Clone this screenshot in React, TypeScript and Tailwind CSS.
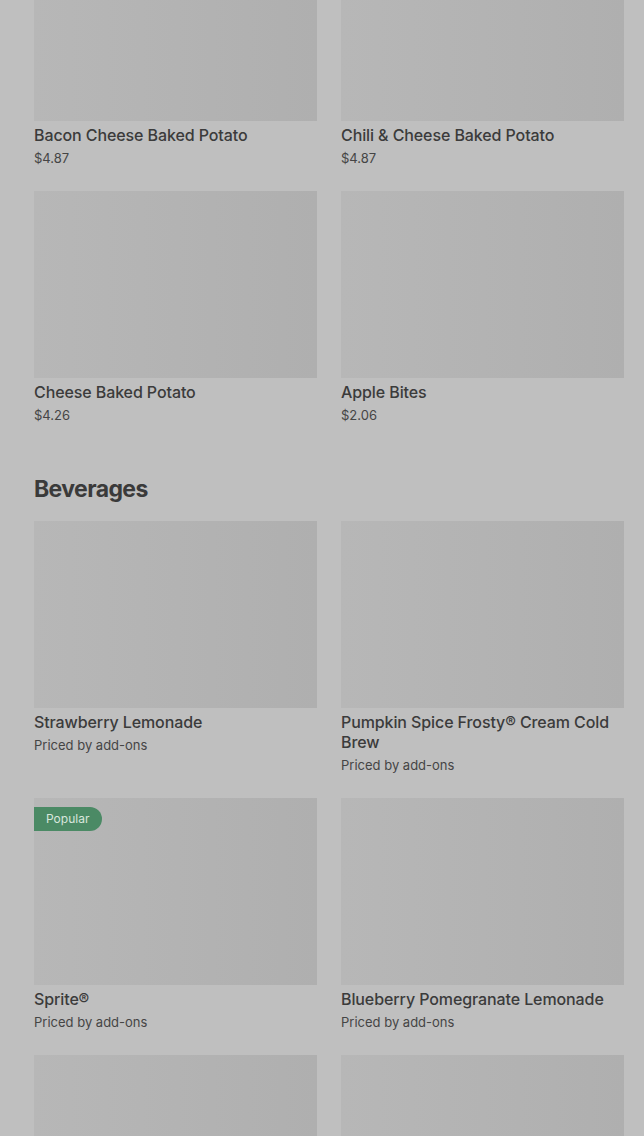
import React from "react";

type Item = {
    name: string;
    price: string;
    popular?: boolean;
};

const sides: Item[] = [
    { name: "Bacon Cheese Baked Potato", price: "$4.87" },
    { name: "Chili & Cheese Baked Potato", price: "$4.87" },
    { name: "Cheese Baked Potato", price: "$4.26" },
    { name: "Apple Bites", price: "$2.06" },
];

const beverages: Item[] = [
    { name: "Strawberry Lemonade", price: "Priced by add-ons" },
    { name: "Pumpkin Spice Frosty® Cream Cold Brew", price: "Priced by add-ons" },
    { name: "Sprite®", price: "Priced by add-ons", popular: true },
    { name: "Blueberry Pomegranate Lemonade", price: "Priced by add-ons" },
    { name: "", price: "" },
    { name: "", price: "" },
];

const MenuCard = ({ item }: { item: Item }) => {
    return (
        <div className="flex flex-col">
            <div className="relative h-[187px] w-full bg-gradient-to-r from-[#b7b7b7] via-[#b3b3b3] to-[#afafaf]">
                {item.popular && (
                    <span className="absolute left-0 top-[9px] flex h-6 items-center rounded-r-full bg-[#4b8a65] pl-3 pr-[13px] text-[12px] text-[#d9e6dd]">
                        Popular
                    </span>
                )}
            </div>
            {item.name && (
                <p className="mt-1 text-[16px] leading-5 font-medium tracking-[-0.1px] text-[#3b3b3b]">
                    {item.name}
                </p>
            )}
            {item.price && (
                <p className="mt-[3px] text-[13px] leading-5 text-[#454545]">{item.price}</p>
            )}
        </div>
    );
};

export default function App() {
    return (
        <div
            className="h-[1136px] w-full overflow-hidden bg-[#bfbfbf]"
            style={{ fontFamily: "Inter, 'Noto Sans', sans-serif" }}
        >
            <div className="-mt-[66px] pl-[34px] pr-5">
                <div className="grid grid-cols-2 gap-x-6 gap-y-[23px]">
                    {sides.map((item) => (
                        <MenuCard key={item.name} item={item} />
                    ))}
                </div>

                <h2 className="mt-12 mb-4 text-[23px] leading-8 font-bold tracking-[-0.6px] text-[#3a3a3a]">
                    Beverages
                </h2>
                <div className="grid grid-cols-2 gap-x-6 gap-y-[23px]">
                    {beverages.map((item, i) => (
                        <MenuCard key={i} item={item} />
                    ))}
                </div>
            </div>
        </div>
    );
}
